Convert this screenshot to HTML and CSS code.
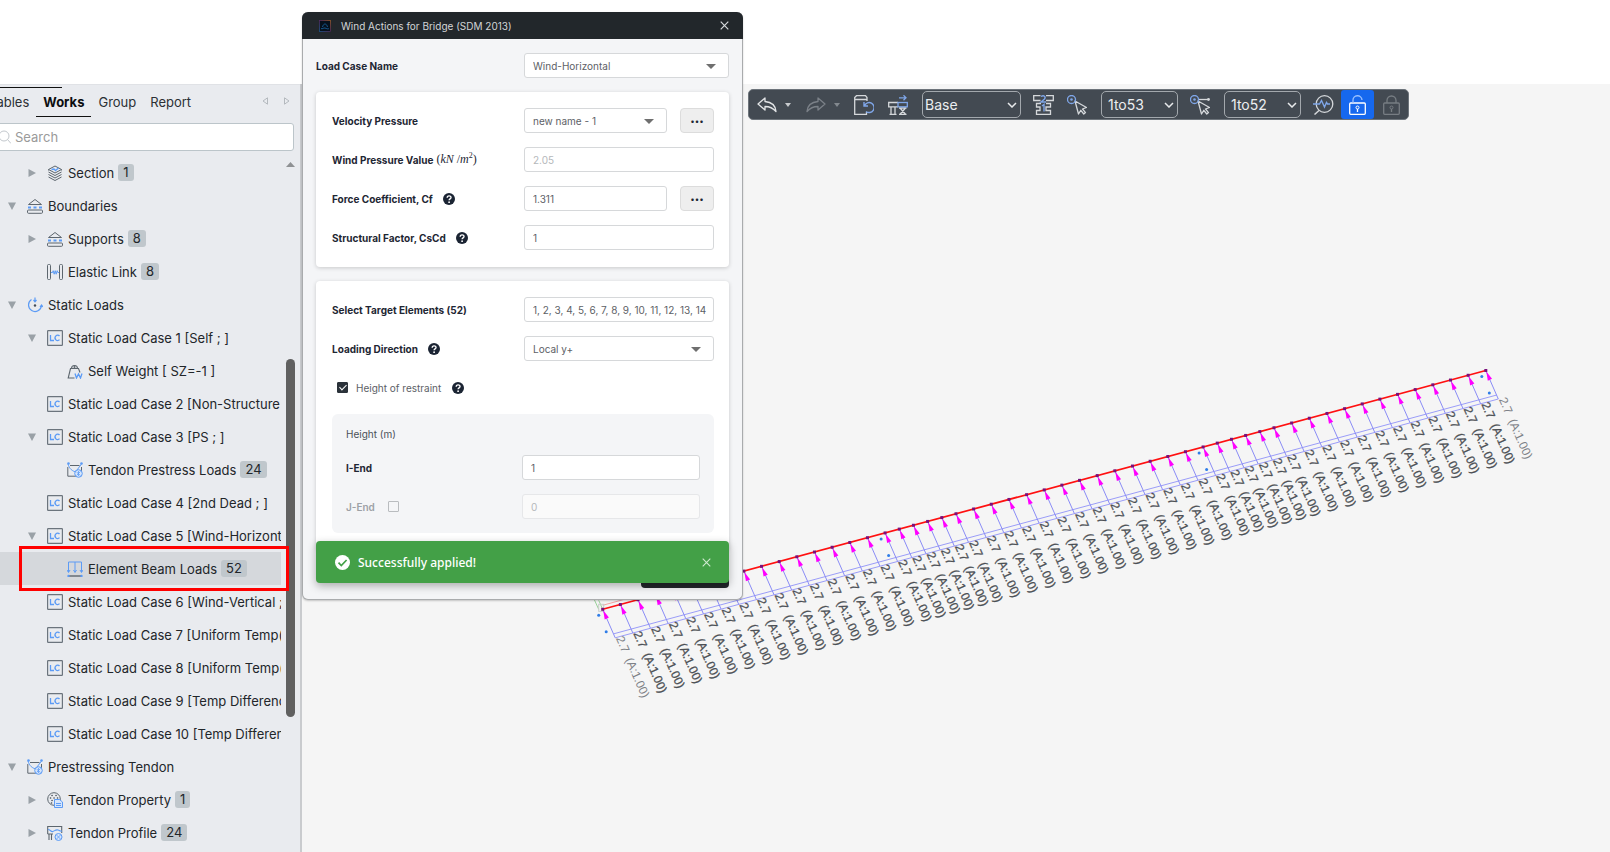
FILE: index.html
```html
<!DOCTYPE html>
<html lang="en">
<head>
<meta charset="utf-8">
<title>Wind Actions for Bridge</title>
<link rel="stylesheet" href="styles.css">
</head>
<body>
<svg class="defs" aria-hidden="true">
  <symbol id="i-section" viewBox="0 0 16 16"><g fill="none" stroke="#5d666e" stroke-linejoin="round"><path d="M1.5 4.5 8 1l6.500 3.500L8 8z"/><path d="M1.500 7 8 10.500 14.500 7M1.500 9.500 8 13l6.500-3.500M1.500 12 8 15.500 14.500 12M1.500 4.500V5.500M14.500 4.500V5.500"/></g><path d="M4.500 4.500 7 4l1.500 1.500 3-2.500" fill="none" stroke="#5c9bf5" stroke-width="1.300"/></symbol>
  <symbol id="i-support" viewBox="0 0 16 16"><g fill="none" stroke="#5d666e"><path d="M1.500 6.500 8 1.500l6.500 5z" stroke-linejoin="round"/><rect x=".5" y="12" width="15" height="3.300" rx="1"/></g><path d="M1 9.500h3M6.500 9.500h3M12 9.500h3" stroke="#5c9bf5" stroke-width="2"/></symbol>
  <symbol id="i-link" viewBox="0 0 16 16"><g fill="none" stroke="#5d666e"><rect x=".5" y=".5" width="3" height="15" rx="1"/><rect x="12.500" y=".5" width="3" height="15" rx="1"/></g><path d="M4 8.500h1.500l.7-1.800 1 3.500 1-3.500 1 3.500 1-3.500.7 1.800H12" fill="none" stroke="#5c9bf5"/></symbol>
  <symbol id="i-loads" viewBox="0 0 16 16"><g fill="none" stroke="#5c9bf5" stroke-width="1.200"><path d="M4.500 2.500A6.500 6.500 0 1 0 14.500 8.500M8 .5v4M6.500 3 8 4.800 9.500 3M13 10l1.500-2L16 10"/></g><circle cx="8" cy="8.500" r="1.200" fill="#444c55"/></symbol>
  <symbol id="i-lc" viewBox="0 0 16 16"><rect x=".6" y=".6" width="14.800" height="14.800" rx=".6" fill="none" stroke="#6b747d" stroke-width="1.200"/><path d="M3.500 5v5.500H7M12.500 6A2.500 2.800 0 1 0 12.500 9.700" fill="none" stroke="#5c9bf5" stroke-width="1.300"/></symbol>
  <symbol id="i-weight" viewBox="0 0 16 16"><g fill="none" stroke="#5d666e" stroke-width="1.100"><path d="M7.500 15H1.200L3.500 5.500h8L13 9.500"/><path d="M4.500 5.500a3 3 0 1 1 6 0"/></g><circle cx="7.500" cy="4" r="1" fill="#5d666e"/><path d="M8 10.500 9.500 15l2-4 2 4 1.500-4.500" fill="none" stroke="#5c9bf5" stroke-width="1.300"/></symbol>
  <symbol id="i-tendon" viewBox="0 0 16 16"><path d="M3 3.500h9.500M.8 5v9.200H9M14.500 5v4" fill="none" stroke="#5d666e"/><path d="M1 2c1.500 5 4 7 9 8.500M14.500 2 10 8" fill="none" stroke="#5c9bf5"/><circle cx="1.500" cy="1.500" r="1.300" fill="#5c9bf5"/><circle cx="14.500" cy="1.500" r="1.300" fill="#5c9bf5"/><circle cx="11.500" cy="11.500" r="3.800" fill="#d6e5fb" stroke="#5c9bf5"/><path d="m9.500 10 4 3.500M13.500 9.500l-4 4M11.500 9v5" stroke="#5c9bf5" stroke-width=".8"/></symbol>
  <symbol id="i-beam" viewBox="0 0 16 16"><path d="M1.500 11V1h13v10M8 1v10M0 9l1.500 2.500L3 9M6.500 9 8 11.500 9.500 9M13 9l1.500 2.500L16 9" fill="none" stroke="#5c9bf5"/><path d="M2 15h12" stroke="#5d666e" stroke-width="1.400"/><circle cx="1.500" cy="15" r="1.200" fill="#5c9bf5"/><circle cx="14.500" cy="15" r="1.200" fill="#5c9bf5"/></symbol>
  <symbol id="i-prop" viewBox="0 0 16 16"><circle cx="7" cy="7" r="6.300" fill="none" stroke="#5d666e"/><path d="M5 3.500h.1M9 3.500h.1M3.500 6h.1M7 6h.1M10.500 6h.1M5 8.500h.1M4.500 11h.1" stroke="#444c55" stroke-width="1.500" stroke-linecap="round"/><path d="M7.500 7.500h5L15.500 10v5.500h-8z" fill="#d6e5fb" stroke="#5c9bf5"/><path d="M9 11.500h5M9 13.500h5" stroke="#5c9bf5"/></symbol>
  <symbol id="i-profile" viewBox="0 0 16 16"><path d="M.7 9V1.500h14V8M.7 9H6M2 9v6M4.500 9v6" fill="none" stroke="#5d666e" stroke-width="1.100"/><path d="M1 4.500c2.500 0 3 3 5 2s3-2 5-1.500 2 1.500 4 1" fill="none" stroke="#5c9bf5" stroke-width="1.100"/><circle cx="11.500" cy="12" r="3.500" fill="#d6e5fb" stroke="#5c9bf5"/><path d="m9.500 10 4 4M13.500 10l-4 4" stroke="#5c9bf5" stroke-width=".8"/></symbol>
  <symbol id="i-help" viewBox="0 0 12 12"><circle cx="6" cy="6" r="6" fill="#1b2433"/><path d="M4.200 4.700C4.200 2.300 8 2.400 8 4.500 8 5.900 6.100 5.900 6.100 7.300" fill="none" stroke="#fff" stroke-width="1.400"/><circle cx="6.100" cy="9.200" r=".9" fill="#fff"/></symbol>
  <symbol id="i-down" viewBox="0 0 8 8"><path d="M0 .5h8L4 8z" fill="#9aa1a7"/></symbol>
  <symbol id="i-right" viewBox="0 0 8 8"><path d="M.5 0v8L8 4z" fill="#9aa1a7"/></symbol>
  <symbol id="i-chev" viewBox="0 0 10 6"><path d="m1 1 4 4 4-4" fill="none" stroke="#e8eaec" stroke-width="1.500"/></symbol>
  <symbol id="i-cursor" viewBox="0 0 20 20"><path d="m8 6 3.500 13 2.300-3.700 3 3.700 1.700-1.400-3-3.600 4-1.500z" fill="none" stroke="#d5d8db" stroke-width="1.300" stroke-linejoin="round"/><circle cx="4.500" cy="4.500" r="4" fill="none" stroke="#7fa6e8" stroke-width="1.300"/><circle cx="4.500" cy="4.500" r="1.300" fill="#7fa6e8"/></symbol>
</svg>

<main class="app">
  <aside class="sidebar">
    <nav class="tabs">
      <button class="tab">Tables</button>
      <button class="tab active">Works</button>
      <button class="tab">Group</button>
      <button class="tab">Report</button>
      <span class="pager">
        <button aria-label="Previous tab"><svg width="6" height="8" viewBox="0 0 6 8"><path d="M5.500.8v6.400L1 4z" fill="none" stroke="#b4b9be"/></svg></button>
        <button aria-label="Next tab"><svg width="6" height="8" viewBox="0 0 6 8"><path d="M.5.8v6.400L5 4z" fill="none" stroke="#b4b9be"/></svg></button>
      </span>
    </nav>
    <label class="search">
      <svg width="13" height="14" viewBox="0 0 13 14"><circle cx="6" cy="6" r="5" fill="none" stroke="#c3c8cd"/><path d="m9.500 9.500 3.500 4" stroke="#c3c8cd"/></svg>
      <input type="text" placeholder="Search" aria-label="Search">
    </label>
    <div class="treewrap">
      <ul class="tree">
        <li class="l2"><div class="row"><button class="tog" aria-label="Expand"><svg><use href="#i-right"/></svg></button><svg class="ic"><use href="#i-section"/></svg><span>Section</span><b>1</b></div></li>
        <li class="l1"><div class="row"><button class="tog" aria-label="Collapse"><svg><use href="#i-down"/></svg></button><svg class="ic"><use href="#i-support"/></svg><span>Boundaries</span></div></li>
        <li class="l2"><div class="row"><button class="tog" aria-label="Expand"><svg><use href="#i-right"/></svg></button><svg class="ic"><use href="#i-support"/></svg><span>Supports</span><b>8</b></div></li>
        <li class="l2"><div class="row"><i class="tog"></i><svg class="ic"><use href="#i-link"/></svg><span>Elastic Link</span><b>8</b></div></li>
        <li class="l1"><div class="row"><button class="tog" aria-label="Collapse"><svg><use href="#i-down"/></svg></button><svg class="ic"><use href="#i-loads"/></svg><span>Static Loads</span></div></li>
        <li class="l2"><div class="row"><button class="tog" aria-label="Collapse"><svg><use href="#i-down"/></svg></button><svg class="ic"><use href="#i-lc"/></svg><span>Static Load Case 1 [Self ; ]</span></div></li>
        <li class="l3"><div class="row"><i class="tog"></i><svg class="ic"><use href="#i-weight"/></svg><span>Self Weight [ SZ=-1 ]</span></div></li>
        <li class="l2"><div class="row"><i class="tog"></i><svg class="ic"><use href="#i-lc"/></svg><span>Static Load Case 2 [Non-Structure Dead ; ]</span></div></li>
        <li class="l2"><div class="row"><button class="tog" aria-label="Collapse"><svg><use href="#i-down"/></svg></button><svg class="ic"><use href="#i-lc"/></svg><span>Static Load Case 3 [PS ; ]</span></div></li>
        <li class="l3"><div class="row"><i class="tog"></i><svg class="ic"><use href="#i-tendon"/></svg><span>Tendon Prestress Loads</span><b>24</b></div></li>
        <li class="l2"><div class="row"><i class="tog"></i><svg class="ic"><use href="#i-lc"/></svg><span>Static Load Case 4 [2nd Dead ; ]</span></div></li>
        <li class="l2"><div class="row"><button class="tog" aria-label="Collapse"><svg><use href="#i-down"/></svg></button><svg class="ic"><use href="#i-lc"/></svg><span>Static Load Case 5 [Wind-Horizontal ; ]</span></div></li>
        <li class="l3 selected"><div class="row"><i class="tog"></i><svg class="ic"><use href="#i-beam"/></svg><span>Element Beam Loads</span><b>52</b></div><div class="marker"></div></li>
        <li class="l2"><div class="row"><i class="tog"></i><svg class="ic"><use href="#i-lc"/></svg><span>Static Load Case 6 [Wind-Vertical ; ]</span></div></li>
        <li class="l2"><div class="row"><i class="tog"></i><svg class="ic"><use href="#i-lc"/></svg><span>Static Load Case 7 [Uniform Temp(-) ; ]</span></div></li>
        <li class="l2"><div class="row"><i class="tog"></i><svg class="ic"><use href="#i-lc"/></svg><span>Static Load Case 8 [Uniform Temp(-) ; ]</span></div></li>
        <li class="l2"><div class="row"><i class="tog"></i><svg class="ic"><use href="#i-lc"/></svg><span>Static Load Case 9 [Temp Difference ; ]</span></div></li>
        <li class="l2"><div class="row"><i class="tog"></i><svg class="ic"><use href="#i-lc"/></svg><span>Static Load Case 10 [Temp Difference ; ]</span></div></li>
        <li class="l1"><div class="row"><button class="tog" aria-label="Collapse"><svg><use href="#i-down"/></svg></button><svg class="ic"><use href="#i-tendon"/></svg><span>Prestressing Tendon</span></div></li>
        <li class="l2"><div class="row"><button class="tog" aria-label="Expand"><svg><use href="#i-right"/></svg></button><svg class="ic"><use href="#i-prop"/></svg><span>Tendon Property</span><b>1</b></div></li>
        <li class="l2"><div class="row"><button class="tog" aria-label="Expand"><svg><use href="#i-right"/></svg></button><svg class="ic"><use href="#i-profile"/></svg><span>Tendon Profile</span><b>24</b></div></li>
      </ul>
      <div class="scroll">
        <svg width="9" height="5" viewBox="0 0 9 5"><path d="M0 5h9L4.500 0z" fill="#8f9194"/></svg>
        <div class="thumb"></div>
      </div>
    </div>
  </aside>

  <section class="viewport">
    <svg class="model" id="model"></svg>
    <div class="toolbar">
      <button aria-label="Undo"><svg width="20" height="16" viewBox="0 0 20 16"><path d="M8 1 1 7l7 6V9.500c5 0 8 1.500 11 5C18.500 8.500 14 5 8 4.500z" fill="none" stroke="#e3e5e7" stroke-width="1.300" stroke-linejoin="round"/></svg></button>
      <svg class="caret" width="6" height="4" viewBox="0 0 6 4"><path d="M0 0h6L3 4z" fill="#c8cbce"/></svg>
      <button class="redo" aria-label="Redo"><svg width="20" height="16" viewBox="0 0 20 16"><path d="m12 1 7 6-7 6V9.500c-5 0-8 1.500-11 5C1.500 8.500 6 5 12 4.500z" fill="none" stroke="#7b8188" stroke-width="1.300" stroke-linejoin="round"/></svg></button>
      <svg class="caret" width="6" height="4" viewBox="0 0 6 4"><path d="M0 0h6L3 4z" fill="#83898f"/></svg>
      <button class="doc" aria-label="Refresh document"><svg width="20" height="20" viewBox="0 0 20 20"><path d="M13 6V2.500L11.500.7h-9L.7 2.500v16.800H12.500V17M.7 4.500H13" fill="none" stroke="#d5d8db" stroke-width="1.300"/><path d="M10 7v4h4M10.500 10.500a5 5 0 1 1 1.500 6" fill="none" stroke="#7fa6e8" stroke-width="1.400"/></svg></button>
      <button class="stage" aria-label="Construction stage"><svg width="20" height="20" viewBox="0 0 20 20"><path d="M10 7.500H.7v4.300H10M3 12v7.300h4V12M1.500 19.300h7M11 13h7.500M11 19.300h7.500M12 13l5.500 6.300M17.500 13 12 19.300" fill="none" stroke="#d5d8db" stroke-width="1.300"/><rect x="10" y="7.500" width="9.300" height="4.300" fill="none" stroke="#7fa6e8" stroke-width="1.300"/><path d="M11 2.800h7M15.500.3 18 2.800 15.500 5.300" fill="none" stroke="#7fa6e8" stroke-width="1.300"/></svg></button>
      <span class="pick wide"><select aria-label="Stage"><option>Base</option></select><svg width="10" height="6"><use href="#i-chev"/></svg></span>
      <button class="sect" aria-label="Section display"><svg width="21" height="20" viewBox="0 0 21 20"><path d="M7.500 5.500H.7V.7h6.800M13 .7h7.300v4.800H13M8 8.500H3.500V12H7v3.500H3.500v4h14v-4H13V12h4.500V8.500H13" fill="none" stroke="#d5d8db" stroke-width="1.300"/><path d="M8 1.500c3-2 5 .5 3.500 2.500L8 7h5M9 11l2-1.500v7" fill="none" stroke="#7fa6e8" stroke-width="1.400"/></svg></button>
      <button class="node" aria-label="Select nodes"><svg width="20" height="20"><use href="#i-cursor"/></svg></button>
      <span class="pick"><select aria-label="Nodes"><option>1to53</option></select><svg width="10" height="6"><use href="#i-chev"/></svg></span>
      <button class="elem" aria-label="Select elements"><svg width="20" height="20" viewBox="0 0 20 20"><path d="M8.500 4.500H18" stroke="#d5d8db" stroke-width="1.300"/><circle cx="18.500" cy="4.500" r="1.400" fill="#d5d8db"/><use href="#i-cursor" width="20" height="20"/></svg></button>
      <span class="pick"><select aria-label="Elements"><option>1to52</option></select><svg width="10" height="6"><use href="#i-chev"/></svg></span>
      <button class="find" aria-label="Query"><svg width="21" height="20" viewBox="0 0 21 20"><circle cx="11.500" cy="9" r="8.300" fill="none" stroke="#d5d8db" stroke-width="1.300"/><path d="m6 15.500-4.500 4" stroke="#d5d8db" stroke-width="1.500"/><path d="M0 9h6.500l2-3.500 3 6.500 2-4.500 1 1.500H17" fill="none" stroke="#7fa6e8" stroke-width="1.400"/></svg></button>
      <button class="unlock" aria-label="Unlock"><svg width="17" height="20" viewBox="0 0 17 20"><rect x=".7" y="8" width="15.600" height="11.300" rx="1" fill="none" stroke="#fff" stroke-width="1.300"/><path d="M4 8V5.500A4.500 4.500 0 0 1 13 5" fill="none" stroke="#9cc2ff" stroke-width="1.300"/><circle cx="8.500" cy="12.500" r="1.500" fill="none" stroke="#fff"/><path d="M8.500 14v3" stroke="#fff" stroke-width="1.300"/></svg></button>
      <button class="lock" aria-label="Lock"><svg width="17" height="20" viewBox="0 0 17 20"><rect x=".7" y="8" width="15.600" height="11.300" rx="1" fill="none" stroke="#777d83" stroke-width="1.300"/><path d="M4 8V5.500a4.500 4.500 0 0 1 9 0V8" fill="none" stroke="#777d83" stroke-width="1.300"/><circle cx="8.500" cy="12.500" r="1.500" fill="none" stroke="#777d83"/><path d="M8.500 14v3" stroke="#777d83" stroke-width="1.300"/></svg></button>
    </div>
  </section>
</main>

<div class="dialog" role="dialog" aria-labelledby="dlg-title">
  <header>
    <svg width="12" height="12" viewBox="0 0 12 12"><defs><linearGradient id="lg" x1="0" y1="1" x2="1" y2="0"><stop offset="0" stop-color="#1c5f9c"/><stop offset=".5" stop-color="#5a2a66"/><stop offset="1" stop-color="#a8632a"/></linearGradient></defs><rect x=".5" y=".5" width="11" height="11" fill="#06101c" stroke="url(#lg)" stroke-width=".7"/><path d="M2 8.500c1.500 1 2.500-1 4-.5s3 1.500 4 .5M3.500 7C4 5 5 4 6 4s2 1 2.500 3" fill="none" stroke="#17598f"/></svg>
    <h1 id="dlg-title">Wind Actions for Bridge (SDM 2013)</h1>
    <button aria-label="Close"><svg width="9" height="9" viewBox="0 0 9 9"><path d="m.7.7 7.600 7.600M8.300.7.7 8.300" stroke="#d6d9dc" stroke-width="1.200"/></svg></button>
  </header>
  <div class="body">
    <div class="field top">
      <label for="lc">Load Case Name</label>
      <span class="sel"><select id="lc"><option>Wind-Horizontal</option></select></span>
    </div>
    <div class="card">
      <div class="field"><label for="vp">Velocity Pressure</label><span class="sel"><select id="vp"><option>new name - 1</option></select></span><button class="more" aria-label="Edit velocity pressure">•••</button></div>
      <div class="field"><label for="wp">Wind Pressure Value<span class="math">(<i>kN</i> /<i>m</i><sup>2</sup>)</span></label><input id="wp" type="text" value="2.05" disabled></div>
      <div class="field"><label for="cf">Force Coefficient, Cf <svg class="help"><use href="#i-help"/></svg></label><input id="cf" type="text" value="1.311"><button class="more" aria-label="Edit force coefficient">•••</button></div>
      <div class="field"><label for="cs">Structural Factor, CsCd <svg class="help"><use href="#i-help"/></svg></label><input id="cs" type="text" value="1"></div>
    </div>
    <div class="card second">
      <div class="field"><label for="te">Select Target Elements (52)</label><input id="te" type="text" value="1, 2, 3, 4, 5, 6, 7, 8, 9, 10, 11, 12, 13, 14"></div>
      <div class="field"><label for="ld">Loading Direction <svg class="help"><use href="#i-help"/></svg></label><span class="sel"><select id="ld"><option>Local y+</option></select></span></div>
      <div class="check"><input id="hr" type="checkbox" checked><label for="hr">Height of restraint</label><svg class="help"><use href="#i-help"/></svg></div>
      <div class="inner">
        <p>Height (m)</p>
        <div class="field"><label for="ie">I-End</label><input id="ie" type="text" value="1"></div>
        <div class="field off"><label for="je">J-End</label><input type="checkbox" aria-label="Enable J-End"><input id="je" type="text" value="0" disabled></div>
      </div>
    </div>
    <button class="apply" aria-label="Apply"></button>
  </div>
  <div class="toast" role="status">
    <svg width="15" height="15" viewBox="0 0 15 15"><circle cx="7.500" cy="7.500" r="7.500" fill="#fff"/><path d="m3.500 7.700 2.800 2.800 5.300-5.500" fill="none" stroke="#43a047" stroke-width="1.700"/></svg>
    <span>Successfully applied!</span>
    <button aria-label="Dismiss"><svg width="9" height="9" viewBox="0 0 9 9"><path d="m.7.7 7.600 7.600M8.300.7.7 8.300" stroke="#cfe8d0" stroke-width="1.100"/></svg></button>
  </div>
</div>
<script src="model.js"></script>
</body>
</html>
```
FILE: styles.css
```css
* { box-sizing: border-box; }
body { margin: 0; display: flex; flex-direction: column; padding-top: 84px; background: #fff; font-family: Inter, "Liberation Sans", sans-serif; position: relative; overflow: hidden; height: 100vh; }
button, input, select { font: inherit; color: inherit; margin: 0; }
button { border: 0; background: none; padding: 0; display: inline-flex; align-items: center; justify-content: center; }
svg { flex: none; }
.defs { position: absolute; width: 0; height: 0; }
.app { flex: 1; min-height: 0; display: flex; }

.sidebar { width: 302px; flex: none; background: #e9ebef; border-right: 2px solid #c9cbce; display: flex; flex-direction: column; overflow: hidden; font-size: 13px; color: #22262a; }
.tabs { display: flex; align-items: stretch; height: 33px; position: relative; border-top: 1px solid #e0e2e6; }
.tabs::before { content: ""; position: absolute; left: 0; top: 2px; width: 62px; height: 1px; background: #111; }
.tab { padding: 2px 7px 0; height: 32px; color: #2c3034; }
.tab:first-child { margin-left: -18px; }
.tab.active { font-weight: 700; color: #0c0e10; border-bottom: 1px solid #111; }
.pager { margin-left: auto; display: flex; gap: 16px; padding-right: 10px; }
.search { display: flex; align-items: center; gap: 4px; margin: 6px 6px 0 -4px; height: 28px; background: #fff; border: 1px solid #bcc5ca; border-radius: 3px; padding-left: 1px; }
.search input { border: 0; outline: 0; background: none; flex: 1; padding: 0; min-width: 0; }
.search input::placeholder { color: #9a9a9a; opacity: 1; }
.treewrap { flex: 1; min-height: 0; display: flex; gap: 5px; margin-top: 5px; }
.tree { list-style: none; margin: 0; padding: 0; width: 281px; flex: none; }
.tree li { position: relative; }
.row { height: 33px; display: flex; align-items: center; overflow: hidden; white-space: nowrap; padding-left: 7px; }
.l2 .row { padding-left: 27px; }
.l3 .row { padding-left: 47px; }
.selected .row { background: #d5d8dc; }
.tog { width: 9px; flex: none; margin-right: 11px; }
.tog svg { width: 8px; height: 8px; }
.ic { width: 16px; height: 16px; margin-right: 5px; }
.row b { font-weight: 400; background: #c0c7cc; border-radius: 3px; padding: 0 5px; line-height: 17px; margin-left: 4px; }
.marker { position: absolute; left: 19px; right: -8px; top: -6px; bottom: -6px; border: 3px solid #f00; z-index: 2; }
.scroll { width: 9px; padding-top: 6px; height: 100%; }
.scroll svg { display: block; }
.thumb { margin-top: 192px; height: 358px; border-radius: 5px; background: #606060; }

.viewport { flex: 1; min-width: 0; position: relative; background: #f5f5f5; overflow: hidden; }
.model { position: absolute; inset: 0; width: 100%; height: 100%; }
.model .label { font: 12px "Liberation Sans", sans-serif; fill: #4b4f54; stroke: #4b4f54; stroke-width: .3; white-space: pre; }
.model .label.end { fill: #7c8085; stroke: none; }
.toolbar { position: absolute; left: 446px; top: 5px; height: 31px; display: flex; align-items: center; background: #434a52; border: 1px solid #6d747b; border-radius: 5px; padding: 0 8px; color: #eceef0; font-size: 14px; }
.caret { margin-left: 8px; }
.redo { margin-left: 15px; }
.redo + .caret { margin-left: 8px; }
.doc { margin-left: 14px; }
.stage { margin-left: 14px; }
.pick { position: relative; width: 77px; height: 27px; margin-left: 14px; }
.pick.wide { width: 99px; }
.pick select { appearance: none; width: 100%; height: 100%; background: #434a52; border: 1px solid #a3a8ad; border-radius: 5px; padding: 0 6px; }
.pick.wide select { padding: 0 2px; }
.pick svg { position: absolute; right: 4px; top: 11px; pointer-events: none; }
.sect { margin-left: 12px; }
.node { margin-left: 13px; }
.elem { margin-left: 12px; }
.pick + .find { margin-left: 12px; }
.unlock { width: 33px; height: 29px; background: #1668ee; border-radius: 3px; margin-left: 7px; }
.lock { margin-left: 9px; }

.dialog { position: absolute; left: 302px; top: 12px; width: 441px; background: #f4f5f7; border: 1px solid #a9abad; border-top: 0; border-radius: 6px; font-size: 10px; color: #1e2633; box-shadow: 0 1px 2px rgba(0,0,0,.2); }
.dialog header { height: 27px; background: #22272b; border-radius: 6px 6px 0 0; margin: 0 -1px; display: flex; align-items: center; padding: 0 14px 0 17px; }
.dialog h1 { margin: 0 auto 0 10px; font-size: 10px; font-weight: 400; color: #d2d5d7; }
.body { padding: 14px 13px 11px; display: flex; flex-direction: column; }
.field { display: flex; align-items: center; height: 25px; }
.field label { width: 192px; flex: none; font-weight: 700; display: flex; align-items: center; white-space: pre; }
.field.top label { width: 208px; }
.field input[type=text], .sel { flex: 1; min-width: 0; height: 25px; border: 1px solid #d6d8da; border-radius: 3px; background: #fff; color: #5d6166; padding: 0 4px 0 8px; }
.field input[type=text]:disabled { color: #b5b8bb; }
.sel { position: relative; display: flex; }
.field .sel { padding: 0; }
.sel select { appearance: none; border: 0; background: none; width: 100%; padding: 0 8px; }
.sel::after { content: ""; position: absolute; right: 12px; top: 10px; border: 5px solid transparent; border-top-color: #6f6f6f; border-bottom: 0; }
.card { background: #fff; border-radius: 4px; box-shadow: 0 1px 4px rgba(0,0,0,.18); padding: 16px 15px 17px 16px; margin-top: 14px; display: flex; flex-direction: column; gap: 14px; }
.more { width: 34px; height: 25px; margin-left: 13px; border: 1px solid #dcdcdc; border-radius: 4px; background: #eee; color: #1e2633; font-size: 8px; }
.help { width: 12px; height: 12px; margin-left: 8px; }
.math { font: 12px "Liberation Serif", serif; margin-left: 3px; }
.math sup { font-size: 8px; line-height: 0; }
.check { display: flex; align-items: center; height: 25px; padding-left: 5px; color: #5d6166; }
.check label { margin: 0 3px 0 8px; }
input[type=checkbox] { appearance: none; width: 11px; height: 11px; border: 1px solid #b9bcbf; border-radius: 1px; }
input[type=checkbox]:checked { background: #2b323a; border-color: #2b323a; position: relative; }
input[type=checkbox]:checked::after { content: ""; position: absolute; left: 3px; top: 0; width: 3px; height: 6px; border: solid #fff; border-width: 0 1px 1px 0; transform: rotate(45deg); }
.inner { background: #f4f5f7; border-radius: 6px; padding: 14px; display: flex; flex-direction: column; gap: 14px; }
.inner p { margin: 0; line-height: 13px; color: #4b5157; }
.inner .field label { width: 176px; }
.inner .off label { width: 42px; color: #9da1a6; font-weight: 600; }
.inner .off input[type=checkbox] { margin-right: 123px; }
.inner .off input[type=text] { background: #fafafa; border-color: #e6e7e9; }
.apply { align-self: flex-end; width: 88px; height: 28px; margin-top: 10px; border-radius: 4px; background: #22272b; }
.toast { position: absolute; left: 13px; right: 13px; bottom: 16px; height: 42px; background: #43a047; border-radius: 4px; box-shadow: 0 3px 8px rgba(0,0,0,.3); display: flex; align-items: center; padding: 0 18px 0 19px; color: #fff; font: 500 12px "Noto Sans", sans-serif; }
.toast span { margin: 0 auto 0 8px; }
```
FILE: model.js
```javascript
const NS = "http://www.w3.org/2000/svg";
const svg = document.getElementById("model");
const add = (name, attrs, text) => {
  const el = document.createElementNS(NS, name);
  for (const k in attrs) el.setAttribute(k, attrs[k]);
  if (text) el.textContent = text;
  svg.appendChild(el);
};
// Spans of the bridge girder: [element count, horizontal step]
const spans = [[16, 17.65], [5, 14.18], [14, 17.65], [5, 14.18], [12, 17.65]];
const start = { x: 300.7, y: 525.3 }, slope = -0.2704;
const xs = [start.x];
spans.forEach(([n, step]) => { for (let i = 0; i < n; i++) xs.push(xs[xs.length - 1] + step); });
const nodes = xs.map(x => ({ x, y: start.y + (x - start.x) * slope }));
const a = nodes[0], b = nodes[nodes.length - 1];
const line = (x1, y1, x2, y2, stroke, w) => add("line", { x1, y1, x2, y2, stroke, "stroke-width": w });

line(a.x - 4, a.y - 9, a.x, a.y, "#9ad29a", 1);
line(a.x - 9, a.y - 11, a.x - 4, a.y, "#9ad29a", 1);
line(a.x, a.y - 4, a.x + 40, a.y - 15, "#f3a3a3", 1);
add("rect", { x: a.x - 4, y: a.y - 5, width: 5, height: 7, fill: "none", stroke: "#c9cdc9" });
line(a.x + 11, a.y + 24.500, b.x + 11, b.y + 24.500, "#9a9cf8", 1);
line(a.x + 12.500, a.y + 28.500, b.x + 12.500, b.y + 28.500, "#9a9cf8", 1);
nodes.forEach(({ x, y }, i) => {
  line(x, y, x + 12.500, y + 28.500, "#8a8cf6", 1);
  const end = i === 0 || i === nodes.length - 1;
  add("text", { class: end ? "label end" : "label", transform: `translate(${x + 13} ${y + 29}) rotate(66.300)` }, "2.7  (A:1.00)");
});
line(a.x, a.y, b.x, b.y, "#ff1010", 1.700);
nodes.forEach(({ x, y }) => {
  add("path", { d: "M0 0 9-2.300V2.300z", fill: "#ff00ff", transform: `translate(${x + .5} ${y + 1}) rotate(66.300)` });
  add("rect", { x: x - 1.500, y: y - 1.500, width: 3, height: 3, fill: "#7a0f7a" });
});
[0, 16, 35, 52].forEach(i => {
  add("circle", { cx: nodes[i].x - 4, cy: nodes[i].y + 6, r: 1.500, fill: "#2f7de8" });
  add("circle", { cx: nodes[i].x + 3.500, cy: nodes[i].y + 22.500, r: 1.500, fill: "#2f7de8" });
});
```
